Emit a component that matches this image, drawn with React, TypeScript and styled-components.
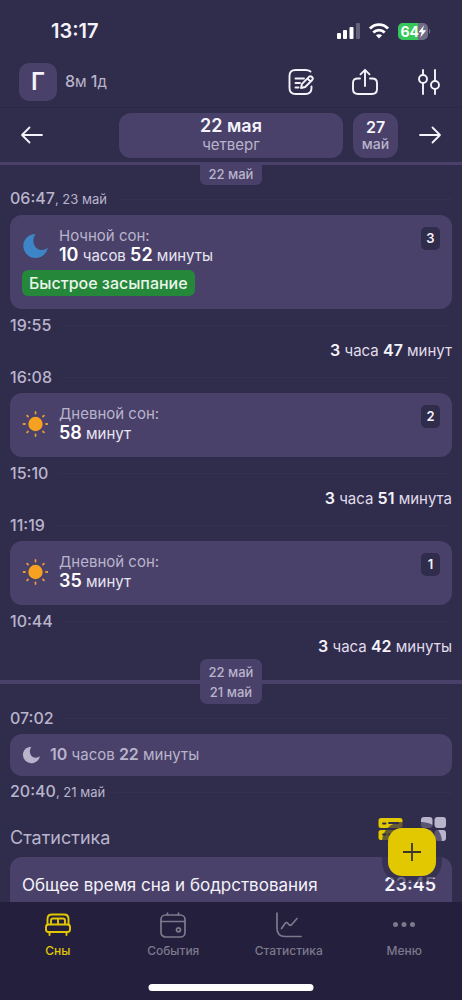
import React from 'react';
import styled, { createGlobalStyle } from 'styled-components';

const color = {
  page: '#302c4b',
  card: '#494169',
  bar: '#231f3d',
  text: '#f4f2fa',
  soft: '#b9b4cc',
  muted: '#7d798c',
  accent: '#e2c800',
  green: '#25873a',
};

const GlobalStyle = createGlobalStyle`
  * { box-sizing: border-box; }
  body {
    margin: 0;
    background: ${color.page};
    color: ${color.text};
    font-family: Inter, "Liberation Sans", sans-serif;
  }
  button {
    font: inherit;
    color: inherit;
    background: none;
    border: 0;
    padding: 0;
    cursor: pointer;
  }
  h2, p { margin: 0; font-weight: 400; }
  b { line-height: 1; }
  svg { display: block; }
`;

const Shell = styled.div`
  position: relative;
  display: flex;
  flex-direction: column;
  height: 100vh;
  overflow: hidden;
`;

const StatusBar = styled.div`
  display: flex;
  align-items: center;
  justify-content: space-between;
  height: 62px;
  padding: 0 31px 0 51px;
  flex: none;
`;

const Clock = styled.span`
  font-size: 20px;
  line-height: 24px;
  font-weight: 600;
`;

const StatusIcons = styled.div`
  display: flex;
  align-items: center;
  gap: 9px;
`;

const Header = styled.header`
  display: flex;
  align-items: center;
  height: 46px;
  padding: 0 19px 6px;
  border-bottom: 1px solid #2b2745;
  flex: none;
`;

const Avatar = styled.button`
  width: 38px;
  height: 38px;
  border-radius: 10px;
  background: ${color.card};
  font-size: 24px;
  line-height: 28px;
  font-weight: 600;
`;

const Age = styled.span`
  margin-left: 8px;
  font-size: 15px;
  line-height: 20px;
  color: ${color.soft};
  b { font-size: 16px; font-weight: 500; }
`;

const HeaderActions = styled.div`
  display: flex;
  gap: 36px;
  margin-left: auto;
`;

const IconButton = styled.button`
  display: grid;
  place-items: center;
`;

const DateNav = styled.nav`
  display: grid;
  grid-template-columns: 24px 45px 1fr 45px 24px;
  align-items: center;
  column-gap: 20px;
  height: 54px;
  padding: 0 20px;
  flex: none;
`;

const DateButton = styled.button<{ $wide?: boolean }>`
  display: flex;
  flex-direction: column;
  align-items: center;
  justify-content: center;
  height: 45px;
  margin: ${p => (p.$wide ? '0 -10px' : '0')};
  border-radius: 12px;
  background: ${color.card};
  font-size: ${p => (p.$wide ? 18 : 16)}px;
  line-height: ${p => (p.$wide ? 20 : 18)}px;
  font-weight: 600;
  span {
    font-size: ${p => (p.$wide ? 15 : 14)}px;
    line-height: ${p => (p.$wide ? 18 : 16)}px;
    font-weight: ${p => (p.$wide ? 400 : 500)};
    color: ${color.soft};
  }
`;

const Feed = styled.main`
  flex: 1;
  min-height: 0;
  overflow: hidden;
`;

const FeedTop = styled.div`
  display: flex;
  justify-content: center;
  border-top: 3px solid ${color.card};
  margin-bottom: -2px;
`;

const DayBreak = styled.div`
  display: flex;
  align-items: center;
  margin: 2px 0 -2px;
  &::before, &::after {
    content: '';
    flex: 1;
    height: 4px;
    background: ${color.card};
  }
`;

const DayTag = styled.div<{ $hanging?: boolean }>`
  display: flex;
  flex-direction: column;
  align-items: center;
  width: 62px;
  padding: ${p => (p.$hanging ? '0 0 2px' : '3px 0 2px')};
  border-radius: ${p => (p.$hanging ? '0 0 6px 6px' : '7px')};
  background: ${color.card};
  font-size: 13px;
  line-height: ${p => (p.$hanging ? 18 : 20)}px;
  font-weight: 500;
  color: ${color.soft};
`;

const TimeRow = styled.div`
  display: flex;
  align-items: center;
  gap: 10px;
  height: 32px;
  padding: 0 10px;
  color: ${color.soft};
  font-size: 13px;
  line-height: 20px;
  b { font-size: 16px; font-weight: 500; }
  &::after {
    content: '';
    flex: 1;
    height: 1px;
    background: #343050;
  }
`;

const Awake = styled.p`
  padding: 0 10px;
  text-align: right;
  font-size: 15px;
  line-height: 20px;
  color: #e0dcec;
  b { font-size: 16px; font-weight: 600; color: ${color.text}; }
`;

const SleepCard = styled.article`
  position: relative;
  margin: 0 10px;
  padding: 11px 12px 13px;
  border-radius: 12px;
  background: ${color.card};
`;

const SleepBody = styled.div`
  display: flex;
  align-items: center;
  gap: 11px;
`;

const SleepTitle = styled.p`
  font-size: 15px;
  line-height: 20px;
  color: ${color.soft};
`;

const Duration = styled.p`
  font-size: 15px;
  line-height: 20px;
  color: #e8e5f2;
  b { font-size: 18px; font-weight: 600; color: #fff; }
`;

const Badge = styled.span`
  position: absolute;
  top: 12px;
  right: 12px;
  width: 19px;
  border-radius: 5px;
  background: ${color.page};
  text-align: center;
  font-size: 13px;
  line-height: 23px;
  font-weight: 600;
`;

const Chip = styled.span`
  display: inline-block;
  margin-top: 4px;
  padding: 0 7px;
  border-radius: 6px;
  background: ${color.green};
  font-size: 16px;
  line-height: 26px;
  font-weight: 500;
  color: #eaf5ea;
  vertical-align: top;
`;

const PreviousNight = styled.article`
  display: flex;
  align-items: center;
  gap: 10px;
  height: 42px;
  margin: 0 10px;
  padding: 0 12px;
  border-radius: 12px;
  background: ${color.card};
  font-size: 15px;
  line-height: 20px;
  color: ${color.soft};
  b { font-size: 16px; font-weight: 600; }
`;

const StatsHeader = styled.div`
  display: flex;
  align-items: center;
  justify-content: space-between;
  margin-top: 9px;
  height: 40px;
  padding: 0 16px 0 10px;
`;

const StatsTitle = styled.h2`
  padding-top: 1px;
  font-size: 18px;
  line-height: 24px;
  color: ${color.soft};
`;

const ViewToggle = styled.div`
  display: flex;
  gap: 18px;
  padding-bottom: 16px;
`;

const StatsCard = styled.section`
  display: flex;
  justify-content: space-between;
  height: 80px;
  margin: 0 10px;
  padding: 16px;
  padding-left: 12px;
  border-radius: 12px;
  background: ${color.card};
  font-size: 17px;
  line-height: 24px;
  b { font-size: 18px; line-height: 24px; font-weight: 600; }
`;

const AddButton = styled.button`
  position: absolute;
  right: 26px;
  bottom: 124px;
  display: grid;
  place-items: center;
  width: 48px;
  height: 48px;
  border-radius: 14px;
  background: ${color.accent};
  box-shadow: 0 0 0 6px rgba(48, 44, 75, 0.7);
`;

const TabBar = styled.nav`
  display: grid;
  grid-template-columns: repeat(4, 1fr);
  height: 98px;
  padding-top: 9px;
  background: ${color.bar};
  flex: none;
`;

const Tab = styled.button<{ $active?: boolean }>`
  display: flex;
  flex-direction: column;
  align-items: center;
  align-self: start;
  gap: 4px;
  font-size: 12px;
  line-height: 16px;
  font-weight: 500;
  color: ${p => (p.$active ? color.accent : color.muted)};
`;

const HomeIndicator = styled.div`
  position: absolute;
  left: 50%;
  bottom: 9px;
  width: 165px;
  height: 7px;
  border-radius: 4px;
  background: #fff;
  transform: translateX(-50%);
`;

const stroke = {
  fill: 'none',
  stroke: 'currentColor',
  strokeWidth: 2,
  strokeLinecap: 'round' as const,
  strokeLinejoin: 'round' as const,
};

const SignalIcon = () => (
  <svg width="23" height="16" viewBox="0 0 23 16" fill="#fff">
    <rect x="0" y="10" width="4" height="6" rx="1" />
    <rect x="6" y="7" width="4" height="9" rx="1" />
    <rect x="12.5" y="4" width="4" height="12" rx="1" />
    <rect x="19" y="0" width="4" height="16" rx="1" opacity="0.25" />
  </svg>
);

const WifiIcon = () => (
  <svg width="20" height="16" viewBox="0 0 20 16" fill="none" stroke="#fff" strokeWidth="2.8">
    <path d="M1 5.6C6 .4 14 .4 19 5.6" />
    <path d="M4.3 9.6C7.5 6.4 12.5 6.4 15.7 9.6" />
    <path d="M10 15.4 6.9 12.3C8.7 10.8 11.3 10.8 13.1 12.3Z" fill="#fff" stroke="none" />
  </svg>
);

const BatteryIcon = () => (
  <svg width="33" height="17" viewBox="0 0 33 17">
    <defs>
      <clipPath id="battery"><rect width="30" height="17" rx="5" /></clipPath>
    </defs>
    <g clipPath="url(#battery)">
      <rect width="30" height="17" fill="#706c85" />
      <rect width="20" height="17" fill="#35c759" />
    </g>
    <path d="M31 6c1.6.5 1.6 4.500 0 5Z" fill="#706c85" />
    <text x="2.5" y="13.5" fontSize="14" fontWeight="700" fill="#fff">64</text>
    <path d="M26 2.5 20.5 9.3H23.7L22.300 14.500 28.300 7.300H24.800Z" fill="#fff" />
  </svg>
);

const NoteIcon = () => (
  <svg width="28" height="28" viewBox="0 0 28 28" {...stroke} strokeWidth="1.9">
    <path d="M23.500 3.600Q21.500 2 18.500 2H8.500Q2.500 2 2.500 8V20Q2.500 26 8.500 26H18.500Q24.500 26 24.500 20V18.500" />
    <path d="M8.500 10.500H17M8.500 15H13M8.500 19.500H11.500" />
    <path d="M14 20 15 15.800 22 8.800Q23.500 7.500 25 9Q26.500 10.500 25.200 12L18.200 19Z M20.500 10.500 23.500 13.500" />
  </svg>
);

const ShareIcon = () => (
  <svg width="28" height="28" viewBox="0 0 28 28" {...stroke} strokeWidth="1.9">
    <path d="M9 10.500H7Q2 10.500 2 15V21Q2 26 7 26H21Q26 26 26 21V15Q26 10.500 21 10.500H19" />
    <path d="M14 18V2M9.500 6.300 14 1.800 18.500 6.300" />
  </svg>
);

const SlidersIcon = () => (
  <svg width="28" height="28" viewBox="0 0 28 28" {...stroke} strokeWidth="1.9">
    <path d="M8 2V6.500M8 15.500V26M20 2V12.500M20 21.500V26" />
    <circle cx="8" cy="11" r="4" />
    <circle cx="20" cy="17" r="4" />
  </svg>
);

const ArrowIcon = ({ back }: { back?: boolean }) => (
  <svg width="24" height="18" viewBox="0 0 24 18" {...stroke} strokeWidth="1.8">
    {back ? <path d="M22 9H2M9.500 1.500 2 9 9.500 16.500" /> : <path d="M2 9H22M14.500 1.500 22 9 14.500 16.500" />}
  </svg>
);

const MoonIcon = ({ size, fill }: { size: number; fill: string }) => (
  <svg width={size} height={size} viewBox="0 0 26 26" fill={fill}>
    <path d="M13.500 1C7 .8 1.300 6 1.300 12.800A12.200 12.200 0 0 0 13.500 25C19.500 25 24.800 20.500 26 14.500C24.500 15.800 22.500 17 19.800 17C13 17 8.500 8.500 13.500 1Z" />
  </svg>
);

const SunIcon = () => (
  <svg width="26" height="26" viewBox="0 0 26 26">
    <circle cx="13.500" cy="13" r="7.200" fill="#f6a121" />
    <path
      d="M13.500 1V2.500M13.500 23.500V25M1.500 13H3M24 13H25.500M5.100 4.600 6 5.500M21 20.500 21.900 21.400M5.100 21.400 6 20.500M21 5.500 21.900 4.600"
      stroke="#e59a3a"
      strokeWidth="1.800"
      strokeLinecap="round"
    />
  </svg>
);

const ListViewIcon = () => (
  <svg width="25" height="24" viewBox="0 0 25 24">
    <rect x="0.500" y="1" width="24" height="10" rx="2.500" fill={color.accent} />
    <rect x="0.500" y="13" width="24" height="10" rx="2.500" fill={color.accent} />
    <path d="M5 6.500H7.500M11 6H20.500M5 17.500H7.500M11 17.500H20.500" stroke={color.page} strokeWidth="1.800" strokeLinecap="round" />
  </svg>
);

const GridViewIcon = () => (
  <svg width="25" height="24" viewBox="0 0 25 24" fill={color.soft}>
    <rect x="0" y="0" width="11.500" height="11" rx="3" />
    <rect x="13.500" y="0" width="11.500" height="11" rx="3" />
    <rect x="0" y="13" width="11.500" height="11" rx="3" />
    <rect x="13.500" y="13" width="11.500" height="11" rx="3" />
  </svg>
);

const BedIcon = () => (
  <svg width="28" height="28" viewBox="0 0 28 28" {...stroke} strokeWidth="1.9">
    <path d="M3.500 13.500V8Q3.500 3.500 8 3.500H20Q24.500 3.500 24.500 8V13.500" />
    <rect x="2" y="13.500" width="24" height="7.500" rx="2.500" />
    <path d="M7 13V9.500Q7 7.500 9 7.500H19Q21 7.500 21 9.500V13M14 7.500V13M5.500 21.500V24M22.500 21.500V24" />
  </svg>
);

const CalendarIcon = () => (
  <svg width="28" height="28" viewBox="0 0 28 28" {...stroke} strokeWidth="1.7">
    <rect x="2" y="4" width="24" height="22" rx="4.500" />
    <path d="M2 10.500H26M8.500 2V4M19.500 2V4" />
    <circle cx="19.500" cy="18.800" r="2" />
  </svg>
);

const ChartIcon = () => (
  <svg width="28" height="28" viewBox="0 0 28 28" {...stroke} strokeWidth="1.7">
    <path d="M2 2V17Q2 25.500 10 25.500H26" />
    <path d="M6.500 17.500 10 12.500Q11.500 10.500 13 12.500L14 13.700Q15.500 15.300 17 13.300L22 7.500" />
  </svg>
);

const DotsIcon = () => (
  <svg width="28" height="28" viewBox="0 0 28 28" fill="currentColor">
    <circle cx="5.500" cy="13.500" r="2.500" />
    <circle cx="14" cy="13.500" r="2.500" />
    <circle cx="22.500" cy="13.500" r="2.500" />
  </svg>
);

const PlusIcon = () => (
  <svg width="20" height="20" viewBox="0 0 20 20" stroke="#3a3524" strokeWidth="1.8">
    <path d="M10 1V19M1 10H19" />
  </svg>
);

const Nap = ({ minutes, index }: { minutes: number; index: number }) => (
  <SleepCard>
    <SleepBody>
      <SunIcon />
      <div>
        <SleepTitle>Дневной сон:</SleepTitle>
        <Duration><b>{minutes}</b> минут</Duration>
      </div>
    </SleepBody>
    <Badge>{index}</Badge>
  </SleepCard>
);

export default function App() {
  return (
    <>
      <GlobalStyle />
      <Shell>
        <StatusBar>
          <Clock>13:17</Clock>
          <StatusIcons>
            <SignalIcon />
            <WifiIcon />
            <BatteryIcon />
          </StatusIcons>
        </StatusBar>
        <Header>
          <Avatar>Г</Avatar>
          <Age><b>8</b>м <b>1</b>д</Age>
          <HeaderActions>
            <IconButton aria-label="Заметки"><NoteIcon /></IconButton>
            <IconButton aria-label="Поделиться"><ShareIcon /></IconButton>
            <IconButton aria-label="Настройки"><SlidersIcon /></IconButton>
          </HeaderActions>
        </Header>
        <DateNav>
          <IconButton aria-label="Назад"><ArrowIcon back /></IconButton>
          <div />
          <DateButton $wide>22 мая<span>четверг</span></DateButton>
          <DateButton>27<span>май</span></DateButton>
          <IconButton aria-label="Вперёд"><ArrowIcon /></IconButton>
        </DateNav>
        <Feed>
          <FeedTop><DayTag $hanging>22 май</DayTag></FeedTop>
          <TimeRow><span><b>06:47</b>, 23 май</span></TimeRow>
          <SleepCard>
            <SleepBody>
              <MoonIcon size={26} fill="#3d85c6" />
              <div>
                <SleepTitle>Ночной сон:</SleepTitle>
                <Duration><b>10</b> часов <b>52</b> минуты</Duration>
              </div>
            </SleepBody>
            <Chip>Быстрое засыпание</Chip>
            <Badge>3</Badge>
          </SleepCard>
          <TimeRow><b>19:55</b></TimeRow>
          <Awake><b>3</b> часа <b>47</b> минут</Awake>
          <TimeRow><b>16:08</b></TimeRow>
          <Nap minutes={58} index={2} />
          <TimeRow><b>15:10</b></TimeRow>
          <Awake><b>3</b> часа <b>51</b> минута</Awake>
          <TimeRow><b>11:19</b></TimeRow>
          <Nap minutes={35} index={1} />
          <TimeRow><b>10:44</b></TimeRow>
          <Awake><b>3</b> часа <b>42</b> минуты</Awake>
          <DayBreak>
            <DayTag><span>22 май</span><span>21 май</span></DayTag>
          </DayBreak>
          <TimeRow><b>07:02</b></TimeRow>
          <PreviousNight>
            <MoonIcon size={18} fill={color.soft} />
            <span><b>10</b> часов <b>22</b> минуты</span>
          </PreviousNight>
          <TimeRow><span><b>20:40</b>, 21 май</span></TimeRow>
          <StatsHeader>
            <StatsTitle>Статистика</StatsTitle>
            <ViewToggle>
              <IconButton aria-label="Списком"><ListViewIcon /></IconButton>
              <IconButton aria-label="Плиткой"><GridViewIcon /></IconButton>
            </ViewToggle>
          </StatsHeader>
          <StatsCard>
            <span>Общее время сна и бодрствования</span>
            <b>23:45</b>
          </StatsCard>
        </Feed>
        <TabBar>
          <Tab $active><BedIcon />Сны</Tab>
          <Tab><CalendarIcon />События</Tab>
          <Tab><ChartIcon />Статистика</Tab>
          <Tab><DotsIcon />Меню</Tab>
        </TabBar>
        <AddButton aria-label="Добавить"><PlusIcon /></AddButton>
        <HomeIndicator />
      </Shell>
    </>
  );
}
